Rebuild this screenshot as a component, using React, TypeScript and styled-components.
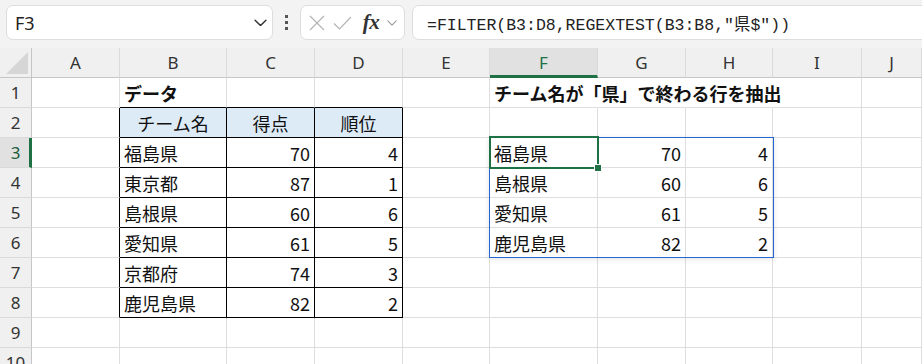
import React from 'react';
import styled, { createGlobalStyle } from 'styled-components';

const GlobalStyle = createGlobalStyle`
  html, body {
    margin: 0;
    padding: 0;
    background: #ffffff;
    overflow: hidden;
  }
  body {
    font-family: "Noto Sans", "Noto Sans CJK JP", sans-serif;
  }
`;

const COLS = [32, 88, 107, 88, 88, 87, 108, 88, 87, 89];
const LETTERS = ['A', 'B', 'C', 'D', 'E', 'F', 'G', 'H', 'I', 'J'];
const GRID_LINE = '#dedede';
const GREEN = '#1e7145';

type Align = 'left' | 'right' | 'center';
interface CellData {
  text: string;
  align?: Align;
  bold?: boolean;
  fill?: boolean;
}

const data: Record<string, CellData> = {
  B1: { text: 'データ', bold: true },
  F1: { text: 'チーム名が「県」で終わる行を抽出', bold: true },
  B2: { text: 'チーム名', align: 'center', fill: true },
  C2: { text: '得点', align: 'center', fill: true },
  D2: { text: '順位', align: 'center', fill: true },
};

const source = [
  ['福島県', '70', '4'],
  ['東京都', '87', '1'],
  ['島根県', '60', '6'],
  ['愛知県', '61', '5'],
  ['京都府', '74', '3'],
  ['鹿児島県', '82', '2'],
];
source.forEach((row, i) => {
  data['B' + (i + 3)] = { text: row[0] };
  data['C' + (i + 3)] = { text: row[1], align: 'right' };
  data['D' + (i + 3)] = { text: row[2], align: 'right' };
});
source
  .filter((row) => row[0].endsWith('県'))
  .forEach((row, i) => {
    data['F' + (i + 3)] = { text: row[0] };
    data['G' + (i + 3)] = { text: row[1], align: 'right' };
    data['H' + (i + 3)] = { text: row[2], align: 'right' };
  });

// cells the row 1 title spills over
const spill = new Set(['F1', 'G1', 'H1']);

const inTable = (r: number, c: number) => r >= 2 && r <= 8 && c >= 1 && c <= 3;

const Page = styled.div`
  display: flex;
  flex-direction: column;
  width: 922px;
  height: 364px;
  overflow: hidden;
  background: #ffffff;
`;

const Toolbar = styled.div`
  display: flex;
  flex-shrink: 0;
  align-items: flex-start;
  height: 48px;
  padding: 5px 0 0 6px;
  box-sizing: border-box;
  background: #f3f3f3;
`;

const Box = styled.div`
  display: flex;
  align-items: center;
  height: 35px;
  box-sizing: border-box;
  background: #ffffff;
  border: 1px solid #dddddd;
  border-radius: 7px;
`;

const NameBox = styled(Box)`
  width: 267px;
  justify-content: space-between;
  padding: 0 5px 0 8px;
  font-size: 18px;
  color: #222222;
`;

const Dots = styled.div`
  display: flex;
  flex-direction: column;
  align-items: center;
  gap: 3px;
  width: 27px;
  padding-top: 10px;
  span {
    width: 3px;
    height: 3px;
    background: #555555;
  }
`;

const EditBox = styled(Box)`
  width: 105px;
  padding-left: 6px;
`;

const IconSlot = styled.div<{ $w: number }>`
  display: flex;
  align-items: center;
  justify-content: center;
  width: ${(p) => p.$w}px;
  height: 100%;
`;

const Fx = styled.span`
  font-family: "Liberation Serif", "DejaVu Serif", serif;
  font-style: italic;
  font-weight: 700;
  font-size: 21px;
  color: #333333;
  letter-spacing: -0.5px;
`;

const FormulaBox = styled(Box)`
  flex: 1;
  margin-left: 7px;
  margin-right: -20px;
  padding-left: 14px;
  font-family: "Liberation Mono", "Noto Sans CJK JP", monospace;
  font-size: 16.5px;
  color: #222222;
  white-space: nowrap;
`;

const Grid = styled.div`
  position: relative;
  flex-shrink: 0;
  display: grid;
  grid-template-columns: ${COLS.map((c) => c + 'px').join(' ')} 1fr;
  grid-auto-rows: 30px;
`;

const Corner = styled.div`
  position: relative;
  background: #f0f0f0;
  border-right: 1px solid #c6c6c6;
  border-bottom: 1px solid #c6c6c6;
  box-sizing: border-box;
  &::after {
    content: '';
    position: absolute;
    right: 3px;
    bottom: 3px;
    border-style: solid;
    border-width: 0 0 22px 22px;
    border-color: transparent transparent #d6d6d6 transparent;
  }
`;

const ColHead = styled.div<{ $active?: boolean }>`
  display: flex;
  align-items: center;
  justify-content: center;
  box-sizing: border-box;
  background: ${(p) => (p.$active ? '#e1e1e1' : '#f0f0f0')};
  border-right: 1px solid #dadada;
  border-bottom: ${(p) => (p.$active ? `3px solid ${GREEN}` : '1px solid #c6c6c6')};
  padding-top: ${(p) => (p.$active ? '2px' : '0')};
  color: ${(p) => (p.$active ? GREEN : '#333333')};
  font-size: 17px;
`;

const RowHead = styled.div<{ $active?: boolean }>`
  display: flex;
  align-items: center;
  justify-content: center;
  box-sizing: border-box;
  background: ${(p) => (p.$active ? '#e1e1e1' : '#f0f0f0')};
  border-right: ${(p) => (p.$active ? `3px solid ${GREEN}` : '1px solid #c6c6c6')};
  padding-left: ${(p) => (p.$active ? '2px' : '0')};
  border-bottom: 1px solid #dadada;
  color: ${(p) => (p.$active ? '#1d5c3a' : '#333333')};
  font-size: 17px;
`;

const Cell = styled.div<{
  $align: Align;
  $bold?: boolean;
  $fill?: boolean;
  $right: string;
  $bottom: string;
}>`
  display: flex;
  align-items: center;
  justify-content: ${(p) =>
    p.$align === 'right' ? 'flex-end' : p.$align === 'center' ? 'center' : 'flex-start'};
  box-sizing: border-box;
  padding: 1px 4px 0 4px;
  min-width: 0;
  white-space: nowrap;
  overflow: visible;
  font-family: "Noto Sans CJK JP", "Noto Sans", sans-serif;
  font-size: 18px;
  font-weight: ${(p) => (p.$bold ? 700 : 400)};
  color: #111111;
  background: ${(p) => (p.$fill ? '#ddebf7' : 'transparent')};
  border-right: 1px solid ${(p) => p.$right};
  border-bottom: 1px solid ${(p) => p.$bottom};
`;

const RangeOutline = styled.div`
  position: absolute;
  left: 489px;
  top: 89px;
  width: 285px;
  height: 121px;
  box-sizing: border-box;
  border: 1px solid #2566d6;
  box-shadow: 0 1px 5px rgba(0, 0, 0, 0.12);
  pointer-events: none;
`;

const ActiveCell = styled.div`
  position: absolute;
  left: 489px;
  top: 88px;
  width: 110px;
  height: 33px;
  box-sizing: border-box;
  border: 2px solid ${GREEN};
  pointer-events: none;
`;

const FillHandle = styled.div`
  position: absolute;
  right: -5px;
  bottom: -5px;
  width: 6px;
  height: 6px;
  background: ${GREEN};
  border: 1px solid #ffffff;
`;

const Chevron = ({ size = 12, color = '#444' }: { size?: number; color?: string }) => (
  <svg width={size} height={size * 0.6} viewBox="0 0 12 7" fill="none">
    <path d="M1 1l5 5 5-5" stroke={color} strokeWidth="1.3" strokeLinecap="round" strokeLinejoin="round" />
  </svg>
);

const App = () => {
  const rows = Array.from({ length: 10 }, (_, i) => i + 1);
  return (
    <Page>
      <GlobalStyle />
      <Toolbar>
        <NameBox>
          <span>F3</span>
          <Chevron size={13} color="#333" />
        </NameBox>
        <Dots>
          <span />
          <span />
          <span />
        </Dots>
        <EditBox>
          <IconSlot $w={20}>
            <svg width="16" height="16" viewBox="0 0 16 16">
              <path d="M1 1l14 14M15 1L1 15" stroke="#b4b4b4" strokeWidth="1.2" />
            </svg>
          </IconSlot>
          <IconSlot $w={31}>
            <svg width="19" height="14" viewBox="0 0 19 14">
              <path d="M1 7.5l5.5 5.5L18 1" stroke="#b4b4b4" strokeWidth="1.2" fill="none" />
            </svg>
          </IconSlot>
          <IconSlot $w={26}>
            <Fx>fx</Fx>
          </IconSlot>
          <IconSlot $w={16}>
            <Chevron size={10} color="#999" />
          </IconSlot>
        </EditBox>
        <FormulaBox>=FILTER(B3:D8,REGEXTEST(B3:B8,"県$"))</FormulaBox>
      </Toolbar>
      <Grid>
        <Corner />
        {LETTERS.map((l) => (
          <ColHead key={l} $active={l === 'F'}>
            {l}
          </ColHead>
        ))}
        {rows.map((r) => (
          <React.Fragment key={r}>
            <RowHead $active={r === 3}>{r}</RowHead>
            {LETTERS.map((l, c) => {
              const ref = l + r;
              const d = data[ref];
              const right = inTable(r, c) || inTable(r, c + 1) ? '#000000' : spill.has(ref) ? 'transparent' : GRID_LINE;
              const bottom = inTable(r, c) || inTable(r + 1, c) ? '#000000' : GRID_LINE;
              return (
                <Cell key={ref} $align={d?.align ?? 'left'} $bold={d?.bold} $fill={d?.fill} $right={right} $bottom={bottom}>
                  {d?.text}
                </Cell>
              );
            })}
          </React.Fragment>
        ))}
        <RangeOutline />
        <ActiveCell>
          <FillHandle />
        </ActiveCell>
      </Grid>
    </Page>
  );
};

export default App;
